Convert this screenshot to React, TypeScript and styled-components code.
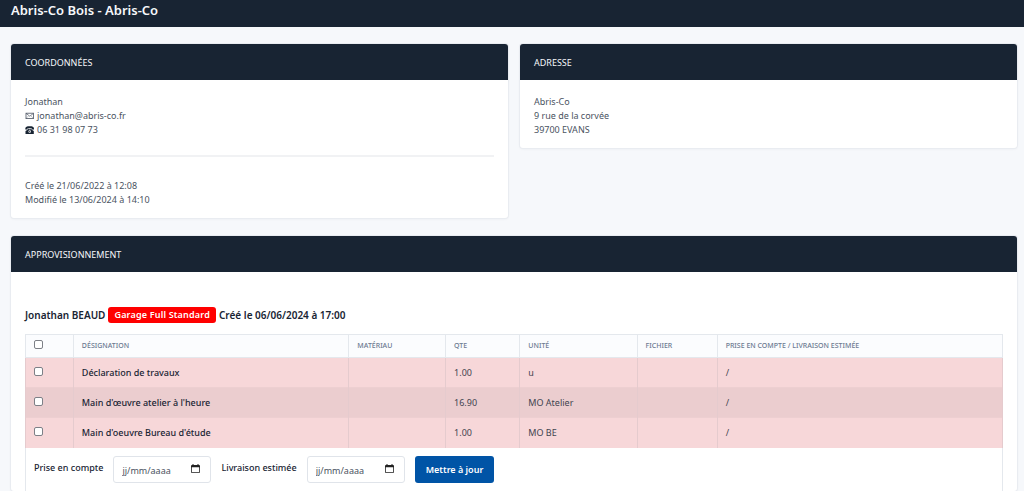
import React from "react";
import styled, { createGlobalStyle } from "styled-components";

const GlobalStyle = createGlobalStyle`
  *, *::before, *::after { box-sizing: border-box; }
  body {
    margin: 0;
    background: #f6f8fb;
    color: #182433;
    font-family: "Noto Sans", "Open Sans", sans-serif;
    font-size: 9px;
    line-height: 14px;
  }
`;

const PageHeader = styled.header`
  padding: 0 11px 7px;
  background: #182433;
  color: #f6f8fb;
`;

const PageTitle = styled.h1`
  margin: 0;
  font-size: 13px;
  line-height: 20px;
  font-weight: 600;
`;

const Main = styled.main`
  display: grid;
  grid-template-columns: 1fr 1fr;
  align-items: start;
  gap: 18px 12px;
  padding: 17px 7px 0 11px;
`;

const CardBox = styled.section<{ $wide?: boolean }>`
  grid-column: ${(p) => (p.$wide ? "1 / -1" : "auto")};
  min-width: 0;
  background: #fff;
  border-radius: 3px;
  box-shadow: 0 0 0 1px #e9ecf1, 0 1px 3px rgba(24, 36, 51, 0.06);
`;

const CardTitle = styled.h2`
  margin: 0;
  padding: 12px 14px 10px;
  border-radius: 3px 3px 0 0;
  background: #182433;
  color: #f6f8fb;
  font-size: 9px;
  line-height: 14px;
  font-weight: 400;
  text-transform: uppercase;
`;

const CardBody = styled.div`
  padding: 15px 14px 11px;
  color: #4a5361;
`;

const SupplyBody = styled.div`
  padding: 35px 14px 0;
`;

const Line = styled.div`
  display: flex;
  align-items: center;
  gap: 3px;
`;

const TextLink = styled.a`
  color: inherit;
  text-decoration: none;
`;

const Divider = styled.hr`
  height: 2px;
  margin: 18px 0 22px;
  border: 0;
  background: #f1f2f4;
`;

const OrderTitle = styled.h3`
  display: flex;
  align-items: center;
  gap: 3px;
  margin: 0 0 11px;
  font-size: 10px;
  line-height: 16px;
  font-weight: 600;
`;

const Badge = styled.span`
  padding: 0 6px;
  border-radius: 3px;
  background: #f00;
  color: #fff;
  font-size: 9px;
  font-weight: 600;
  letter-spacing: 0.02em;
`;

const Table = styled.table`
  width: 100%;
  table-layout: fixed;
  border-collapse: collapse;
`;

const HeadCell = styled.th`
  height: 23px;
  padding: 0 8px;
  border: 1px solid #e4e8ed;
  background: #fbfcfe;
  color: #6c7a91;
  font-size: 7px;
  line-height: 10px;
  font-weight: 500;
  text-align: left;
  text-transform: uppercase;
  white-space: nowrap;
`;

const Row = styled.tr<{ $dark?: boolean }>`
  height: 30px;
  background: ${(p) => (p.$dark ? "#ebcdcf" : "#f7d7d9")};
`;

const Cell = styled.td<{ $strong?: boolean }>`
  padding: 0 8px;
  border-left: 1px solid #e5cbce;
  border-right: 1px solid #e5cbce;
  border-top: 1px solid #edcfd1;
  color: ${(p) => (p.$strong ? "#182433" : "#3f4450")};
  font-weight: ${(p) => (p.$strong ? 500 : 400)};
  white-space: nowrap;
`;

const FootCell = styled.td`
  padding: 8px;
  border-left: 1px solid #e4e8ed;
  border-right: 1px solid #e4e8ed;
`;

const Checkbox = styled.input`
  appearance: none;
  display: block;
  width: 9px;
  height: 9px;
  margin: 0 0 3px;
  border: 1px solid #7d8087;
  border-radius: 2px;
  background: #fff;
  &:checked { background: #0054a6; }
`;

const UpdateForm = styled.form`
  display: flex;
  align-items: flex-start;
  gap: 10px;
`;

const FieldLabel = styled.label`
  padding-top: 5px;
  font-weight: 500;
`;

const DateField = styled.span`
  display: flex;
  align-items: center;
  width: 98px;
  height: 27px;
  padding: 0 10px 0 8px;
  border: 1px solid #e0e4ea;
  border-radius: 3px;
  background: #fff;
`;

const DateInput = styled.input`
  flex: 1;
  min-width: 0;
  padding: 3px 0 0;
  border: 0;
  outline: 0;
  background: transparent;
  color: #182433;
  font: inherit;
  &::placeholder { color: #4a5361; opacity: 1; }
`;

const SubmitButton = styled.button`
  height: 27px;
  padding: 2px 11px 0;
  border: 0;
  border-radius: 3px;
  background: #0054a6;
  color: #fff;
  font: inherit;
  font-weight: 600;
  white-space: nowrap;
`;

const MailIcon = () => (
  <svg width="9" height="8" viewBox="0 0 9 8" fill="none" stroke="#4a5361" strokeWidth="0.8" aria-hidden="true">
    <rect x="1" y="1.2" width="7.5" height="5.4" />
    <path d="M1.2 1.5 4.75 4.2 8.3 1.5" strokeWidth="0.7" />
    <path d="M1.2 6.3 3.4 4M8.3 6.3 6.1 4" strokeWidth="0.35" />
  </svg>
);

const PhoneIcon = () => (
  <svg width="9" height="8" viewBox="0 0 9 8" aria-hidden="true">
    <path
      fill="#182433"
      fillRule="evenodd"
      d="M.3 2.6C.3.8 2 .2 4.7.2S9 .8 9 2.6v.9H6.8V2.3H2.5v1.2H.3zM3 2.8h.7v.5h2v-.5h.7v.8L8.8 5v2.9H.5V5L3 3.6zM4.7 4.2a1.3 1.3 0 1 0 0 2.6 1.3 1.3 0 0 0 0-2.6z"
    />
    <circle cx="4.7" cy="5.5" r="0.6" fill="#182433" />
  </svg>
);

const CalendarIcon = () => (
  <svg width="9" height="10" viewBox="0 0 9 10" aria-hidden="true">
    <path
      fill="#222"
      fillRule="evenodd"
      d="M1.5 0h1v1h4V0h1v1H8a1 1 0 0 1 1 1v6a1 1 0 0 1-1 1H1a1 1 0 0 1-1-1V2a1 1 0 0 1 1-1h.5zM.8 3.2v5h7.4v-5z"
    />
  </svg>
);

type CardProps = { title: string; wide?: boolean; children: React.ReactNode };

const Card = ({ title, wide, children }: CardProps) => (
  <CardBox $wide={wide}>
    <CardTitle>{title}</CardTitle>
    {children}
  </CardBox>
);

const DatePicker = ({ id, label }: { id: string; label: string }) => (
  <>
    <FieldLabel htmlFor={id}>{label}</FieldLabel>
    <DateField>
      <DateInput id={id} type="text" placeholder="jj/mm/aaaa" />
      <CalendarIcon />
    </DateField>
  </>
);

const columns = ["Désignation", "Matériau", "Qte", "Unité", "Fichier", "Prise en compte / Livraison estimée"];
const columnWidths = ["4.9%", "28.2%", "9.9%", "7.6%", "12%", "8.2%", "29.2%"];

const items = [
  { name: "Déclaration de travaux", qty: "1.00", unit: "u" },
  { name: "Main d'œuvre atelier à l'heure", qty: "16.90", unit: "MO Atelier" },
  { name: "Main d'oeuvre Bureau d'étude", qty: "1.00", unit: "MO BE" },
];

export default function App() {
  return (
    <>
      <GlobalStyle />
      <PageHeader>
        <PageTitle>Abris-Co Bois - Abris-Co</PageTitle>
      </PageHeader>
      <Main>
        <Card title="Coordonnées">
          <CardBody>
            <Line>Jonathan</Line>
            <Line>
              <MailIcon />
              <TextLink href="mailto:jonathan@abris-co.fr">jonathan@abris-co.fr</TextLink>
            </Line>
            <Line>
              <PhoneIcon />
              <TextLink href="tel:0631980773">06 31 98 07 73</TextLink>
            </Line>
            <Divider />
            <Line>Créé le 21/06/2022 à 12:08</Line>
            <Line>Modifié le 13/06/2024 à 14:10</Line>
          </CardBody>
        </Card>
        <Card title="Adresse">
          <CardBody>
            <Line>Abris-Co</Line>
            <Line>9 rue de la corvée</Line>
            <Line>39700 EVANS</Line>
          </CardBody>
        </Card>
        <Card title="Approvisionnement" wide>
          <SupplyBody>
            <OrderTitle>
              <span>Jonathan BEAUD</span>
              <Badge>Garage Full Standard</Badge>
              <span>Créé le 06/06/2024 à 17:00</span>
            </OrderTitle>
            <Table>
              <colgroup>
                {columnWidths.map((width, i) => (
                  <col key={i} width={width} />
                ))}
              </colgroup>
              <thead>
                <tr>
                  <HeadCell>
                    <Checkbox type="checkbox" aria-label="Tout sélectionner" />
                  </HeadCell>
                  {columns.map((c) => (
                    <HeadCell key={c}>{c}</HeadCell>
                  ))}
                </tr>
              </thead>
              <tbody>
                {items.map((item, i) => (
                  <Row key={item.name} $dark={i % 2 === 1}>
                    <Cell>
                      <Checkbox type="checkbox" aria-label={item.name} />
                    </Cell>
                    <Cell $strong>{item.name}</Cell>
                    <Cell />
                    <Cell>{item.qty}</Cell>
                    <Cell>{item.unit}</Cell>
                    <Cell />
                    <Cell>/</Cell>
                  </Row>
                ))}
              </tbody>
              <tfoot>
                <tr>
                  <FootCell colSpan={7}>
                    <UpdateForm onSubmit={(e) => e.preventDefault()}>
                      <DatePicker id="taken" label="Prise en compte" />
                      <DatePicker id="delivery" label="Livraison estimée" />
                      <SubmitButton type="submit">Mettre à jour</SubmitButton>
                    </UpdateForm>
                  </FootCell>
                </tr>
              </tfoot>
            </Table>
          </SupplyBody>
        </Card>
      </Main>
    </>
  );
}
